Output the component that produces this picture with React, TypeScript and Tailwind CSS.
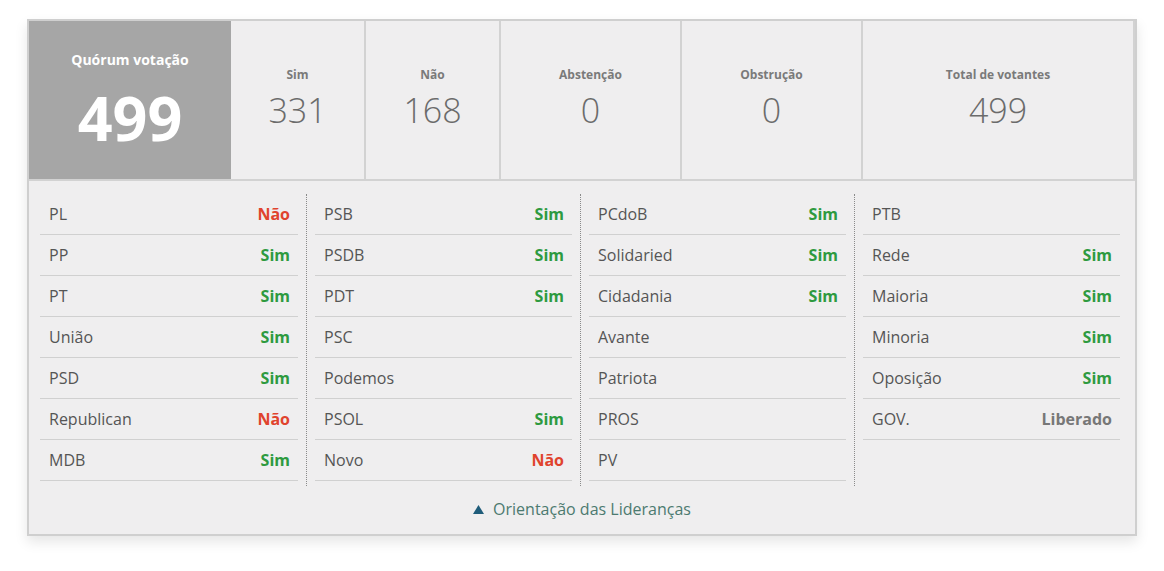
import { ReactNode } from "react";

type Vote = "Sim" | "Não" | "Liberado" | "";

const columns: [string, Vote][][] = [
  [
    ["PL", "Não"],
    ["PP", "Sim"],
    ["PT", "Sim"],
    ["União", "Sim"],
    ["PSD", "Sim"],
    ["Republican", "Não"],
    ["MDB", "Sim"],
  ],
  [
    ["PSB", "Sim"],
    ["PSDB", "Sim"],
    ["PDT", "Sim"],
    ["PSC", ""],
    ["Podemos", ""],
    ["PSOL", "Sim"],
    ["Novo", "Não"],
  ],
  [
    ["PCdoB", "Sim"],
    ["Solidaried", "Sim"],
    ["Cidadania", "Sim"],
    ["Avante", ""],
    ["Patriota", ""],
    ["PROS", ""],
    ["PV", ""],
  ],
  [
    ["PTB", ""],
    ["Rede", "Sim"],
    ["Maioria", "Sim"],
    ["Minoria", "Sim"],
    ["Oposição", "Sim"],
    ["GOV.", "Liberado"],
  ],
];

const voteColor: Record<Vote, string> = {
  Sim: "text-[#2e9a40]",
  Não: "text-[#e0432d]",
  Liberado: "text-[#777777]",
  "": "",
};

function Stat({ label, value, className }: { label: string; value: ReactNode; className: string }) {
  return (
    <div className={`${className} flex flex-col items-center border-r-2 border-[#d2d2d2] pt-[45px]`}>
      <span className="text-[12px] font-bold leading-[18px] text-[#7a7a7a]">{label}</span>
      <span className="mt-[6px] text-[34px] font-light leading-[40px] text-[#6b6b6b]">{value}</span>
    </div>
  );
}

export default function App() {
  return (
    <div
      className="min-h-[571px] bg-white pl-[27px] pt-[19px]"
      style={{ fontFamily: '"Open Sans", "Noto Sans", sans-serif' }}
    >
      <div className="w-[1110px] border-2 border-[#cfcfcf] bg-[#efeeef] shadow-[0_6px_12px_rgba(0,0,0,0.10)]">
        {/* Totals */}
        <div className="flex h-[160px] border-b-2 border-[#d2d2d2]">
          <div className="flex w-[202px] flex-col items-center bg-[#a6a6a6] pt-[29px] text-white">
            <span className="text-[14px] font-bold leading-[20px]">Quórum votação</span>
            <span className="mt-[12px] text-[61px] font-bold leading-[72px]">499</span>
          </div>
          <Stat className="w-[135px]" label="Sim" value="331" />
          <Stat className="w-[135px]" label="Não" value="168" />
          <Stat className="w-[181px]" label="Abstenção" value="0" />
          <Stat className="w-[181px]" label="Obstrução" value="0" />
          <Stat className="flex-1 border-r-0" label="Total de votantes" value="499" />
        </div>

        {/* Party orientation */}
        <div className="grid grid-cols-[274px_274px_274px_274px] pl-[3px] pt-[13px]">
          {columns.map((col, ci) => (
            <div
              key={ci}
              className={`px-[8px] pb-[5px] ${ci > 0 ? "border-l border-dotted border-[#8a8a8a]" : ""}`}
            >
              {col.map(([party, vote]) => (
                <div
                  key={party}
                  className="flex h-[41px] items-center justify-between border-b border-[#d0d0d0] pl-[9px] pr-[8px] text-[16px]"
                >
                  <span className="text-[#555555]">{party}</span>
                  {vote && <span className={`font-bold ${voteColor[vote]}`}>{vote}</span>}
                </div>
              ))}
            </div>
          ))}
        </div>

        <div className="flex h-[48px] items-center justify-center gap-[9px] pb-[2px] text-[16px] text-[#4c7a70]">
          <svg width="11" height="9" viewBox="0 0 11 9">
            <path d="M5.5 0L11 9H0z" fill="#1f5c7a" />
          </svg>
          <span>Orientação das Lideranças</span>
        </div>
      </div>
    </div>
  );
}
